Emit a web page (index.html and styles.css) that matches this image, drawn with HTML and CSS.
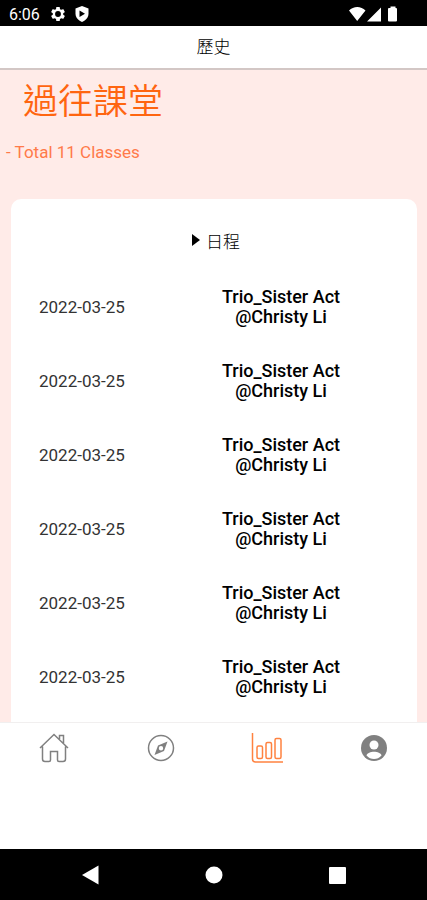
FILE: index.html
```html
<!DOCTYPE html>
<html lang="zh-Hant">
<head>
<meta charset="UTF-8">
<meta name="viewport" content="width=device-width, initial-scale=1">
<link rel="stylesheet" href="styles.css">
<title>歷史</title>
</head>
<body>
<div class="status">
  <span class="clock">6:06</span>
  <svg class="gear" width="16" height="16" viewBox="1 1 22 22"><path fill="#fff" d="M19.14 12.94c.04-.3.06-.61.06-.94s-.02-.64-.07-.94l2.03-1.58a.49.49 0 0 0 .12-.61l-1.92-3.32a.49.49 0 0 0-.59-.22l-2.39.96a7 7 0 0 0-1.62-.94l-.36-2.54A.48.48 0 0 0 13.92 2.4h-3.84a.48.48 0 0 0-.47.41l-.36 2.54a7 7 0 0 0-1.62.94l-2.39-.96a.48.48 0 0 0-.59.22L2.74 8.87a.48.48 0 0 0 .12.61l2.03 1.58a6 6 0 0 0 0 1.88l-2.03 1.58a.49.49 0 0 0-.12.61l1.92 3.32c.12.22.37.29.59.22l2.39-.96c.5.38 1.03.7 1.62.94l.36 2.54c.05.24.24.41.48.41h3.84c.24 0 .44-.17.47-.41l.36-2.54a7 7 0 0 0 1.62-.94l2.39.96c.22.08.47 0 .59-.22l1.92-3.32a.48.48 0 0 0-.12-.61zM12 16a4 4 0 1 1 0-8 4 4 0 0 1 0 8z"/></svg>
  <svg width="14" height="16" viewBox="0 0 14 16"><path fill="#fff" d="M7 0l6.500 2.500v5c0 4-2.500 6.500-6.500 8.500-4-2-6.500-4.500-6.500-8.500v-5z"/><path fill="#000" d="M4.500 4.500v6.500L10 7.700z"/></svg>
  <svg class="signals" width="50" height="16" viewBox="0 0 50 16"><path fill="#fff" d="M0 4.500C4.500-.2 12-.2 16.500 4.500L8.200 15zM18 15.500L32 1.500v14zM39 3q0-1 1-1h1.500V.5h5V2H47q1 0 1 1v11.500q0 1-1 1h-7q-1 0-1-1z"/></svg>
</div>
<header class="topbar">歷史</header>
<main class="content">
  <h1>過往課堂</h1>
  <p class="total">- Total 11 Classes</p>
  <div class="card">
    <table>
      <colgroup><col class="col-date"><col></colgroup>
      <thead>
        <tr><th colspan="2"><button type="button" class="sort"><svg width="8" height="12" viewBox="0 0 8 12"><path d="M0 0l8 6-8 6z"/></svg>日程</button></th></tr>
      </thead>
      <tbody>
        <tr><td class="date">2022-03-25</td><td class="lesson">Trio_Sister Act<br>@Christy Li</td></tr>
        <tr><td class="date">2022-03-25</td><td class="lesson">Trio_Sister Act<br>@Christy Li</td></tr>
        <tr><td class="date">2022-03-25</td><td class="lesson">Trio_Sister Act<br>@Christy Li</td></tr>
        <tr><td class="date">2022-03-25</td><td class="lesson">Trio_Sister Act<br>@Christy Li</td></tr>
        <tr><td class="date">2022-03-25</td><td class="lesson">Trio_Sister Act<br>@Christy Li</td></tr>
        <tr><td class="date">2022-03-25</td><td class="lesson">Trio_Sister Act<br>@Christy Li</td></tr>
      </tbody>
    </table>
  </div>
</main>
<nav class="tabs">
  <a href="#home" aria-label="Home"><svg width="32" height="32" viewBox="0 0 32 32"><path d="M2 16L16 2.500 30 16M4.500 14.500V27q0 2.500 2.500 2.500h4q1.500 0 1.500-1.500v-8.500h7V28q0 1.500 1.500 1.500h4q2.500 0 2.500-2.500V14.500M21.500 7V3.500h4V11"/></svg></a>
  <a href="#explore" aria-label="Explore"><svg width="32" height="32" viewBox="0 0 32 32"><circle cx="16" cy="16" r="12.500"/><path fill="#808080" stroke="none" fill-rule="evenodd" d="M22.500 9.500l-3.500 9.500-9.500 4 3.500-9.500zM16 14a2.200 2.200 0 1 0 0 4.400 2.200 2.200 0 0 0 0-4.400z"/></svg></a>
  <a href="#history" class="active" aria-label="History"><svg width="32" height="32" viewBox="0 0 32 32"><path d="M1.500 1v26q0 3 3 3H32"/><rect x="6" y="14" width="5.500" height="12.500" rx="1.500"/><rect x="15" y="10.500" width="5.500" height="16" rx="1.500"/><rect x="24" y="6.500" width="6" height="20" rx="1.500"/></svg></a>
  <a href="#account" aria-label="Account"><svg width="32" height="32" viewBox="0 0 32 32"><circle cx="16" cy="16" r="13" fill="#808080" stroke="none"/><circle cx="16" cy="13" r="4.500" fill="#fff" stroke="none"/><path fill="#fff" stroke="none" d="M8.500 23.500c1.500-5 13.500-5 15 0-4 4.700-11 4.700-15 0z"/></svg></a>
</nav>
<footer class="android">
  <button type="button" aria-label="Back"><svg width="18" height="20" viewBox="0 0 18 20"><path d="M1 10L17.500.500v19z"/></svg></button>
  <button type="button" aria-label="Home"><svg width="18" height="18" viewBox="0 0 18 18"><circle cx="9" cy="9" r="8.500"/></svg></button>
  <button type="button" aria-label="Recent"><svg width="18" height="18" viewBox="0 0 18 18"><rect x="1" y="1" width="17" height="17" rx="1"/></svg></button>
</footer>
</body>
</html>
```
FILE: styles.css
```css
* {
  box-sizing: border-box;
}
body {
  margin: 0;
  height: 100vh;
  display: flex;
  flex-direction: column;
  overflow: hidden;
  background: #fff;
  font-family: Roboto, "Noto Sans CJK TC", sans-serif;
  font-size: 17px;
  color: #333;
}
svg {
  display: block;
}
.status {
  flex: none;
  display: flex;
  align-items: center;
  height: 26px;
  padding: 2px 28px 0 9px;
  background: #000;
  color: #fff;
}
.clock {
  font-size: 16px;
}
.gear {
  margin: 0 9px 0 10px;
}
.signals {
  margin-left: auto;
}
.topbar {
  flex: none;
  height: 44px;
  line-height: 42px;
  text-align: center;
  font-weight: 300;
  color: #000;
  border-bottom: 2px solid #d3c7c5;
}
.content {
  flex: 1;
  min-height: 0;
  overflow: hidden;
  background: #ffebe8;
}
h1 {
  margin: 0;
  padding: 9px 23px 0;
  font-size: 35px;
  line-height: 48px;
  font-weight: 350;
  color: #ff6510;
}
.total {
  margin: 0;
  padding: 15px 6px 0;
  line-height: 20px;
  color: #ff7a4a;
}
.card {
  margin: 37px 10px 0 11px;
  padding: 11px 0 40px;
  background: #fff;
  border-radius: 10px;
}
table {
  width: 100%;
  border-collapse: collapse;
  table-layout: fixed;
}
.col-date {
  width: 33%;
}
th {
  height: 60px;
  padding: 0;
}
.sort {
  display: inline-flex;
  align-items: center;
  gap: 6px;
  padding: 0 0 0 4px;
  border: 0;
  background: none;
  font: inherit;
  font-weight: 300;
  color: #000;
}
td {
  height: 74px;
  padding: 0;
}
.date {
  padding-left: 28px;
}
.lesson {
  text-align: center;
  font-size: 18px;
  line-height: 20px;
  font-weight: 500;
  color: #000;
}
.tabs {
  flex: none;
  display: flex;
  height: 127px;
  padding: 9px 0 0 1px;
  border-top: 1px solid #f1efef;
}
.tabs a {
  flex: 1;
  display: flex;
  justify-content: center;
  align-items: flex-start;
}
.tabs svg {
  fill: none;
  stroke: #808080;
  stroke-width: 1.5;
}
.tabs .active svg {
  stroke: #ff8240;
}
.android {
  flex: none;
  display: flex;
  justify-content: space-between;
  align-items: center;
  height: 51px;
  padding: 0 81px;
  background: #000;
}
.android button {
  padding: 0;
  border: 0;
  background: none;
}
.android svg {
  fill: #fff;
}
```
